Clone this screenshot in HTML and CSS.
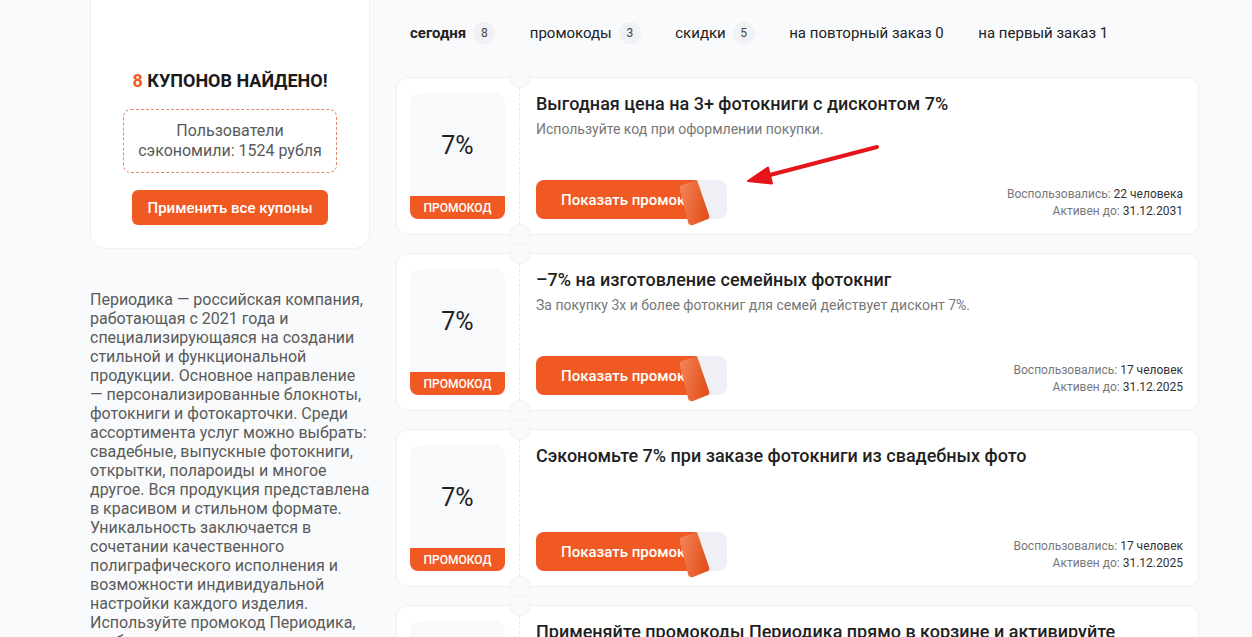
FILE: index.html
```html
<!DOCTYPE html>
<html lang="ru">
<head>
<meta charset="utf-8">
<title>Промокоды Периодика</title>
<link rel="stylesheet" href="styles.css">
</head>
<body>
<div class="page">
  <aside class="side">
    <div class="summary">
      <h2 class="summary-title"><span class="accent">8</span> КУПОНОВ НАЙДЕНО!</h2>
      <div class="saved">Пользователи сэкономили: 1524 рубля</div>
      <button class="apply-all">Применить все купоны</button>
    </div>
    <p class="about">Периодика — российская компания, работающая с 2021 года и специализирующаяся на создании стильной и функциональной продукции. Основное направление — персонализированные блокноты, фотокниги и фотокарточки. Среди ассортимента услуг можно выбрать: свадебные, выпускные фотокниги, открытки, полароиды и многое другое. Вся продукция представлена в красивом и стильном формате. Уникальность заключается в сочетании качественного полиграфического исполнения и возможности индивидуальной настройки каждого изделия. Используйте промокод Периодика, чтобы сэкономить на заказе.</p>
  </aside>

  <main class="main">
    <nav class="tabs">
      <span class="tab tab-active">сегодня <span class="badge">8</span></span>
      <span class="tab">промокоды <span class="badge">3</span></span>
      <span class="tab">скидки <span class="badge">5</span></span>
      <span class="tab">на повторный заказ 0</span>
      <span class="tab">на первый заказ 1</span>
    </nav>

    <div class="coupons">
      <article class="coupon">
        <div class="stub">
          <div class="stub-box">
            <div class="stub-value">7%</div>
            <div class="stub-label">ПРОМОКОД</div>
          </div>
        </div>
        <div class="body">
          <h3 class="title">Выгодная цена на 3+ фотокниги с дисконтом 7%</h3>
          <p class="desc">Используйте код при оформлении покупки.</p>
          <div class="bottom">
            <div class="reveal">
              <span class="reveal-face">Показать промокод</span>
              <svg class="peel" width="40" height="50" viewBox="0 0 40 50"><defs><linearGradient id="pg1" x1="0" y1="0" x2="1" y2="0.3"><stop offset="0" stop-color="#f4875a"/><stop offset="1" stop-color="#e2521d"/></linearGradient></defs><path d="M8 7 Q5 8 6 12 L14 44 Q15 48 19 47 L34 41 Q36 40 35 37 L23 2 Z" fill="url(#pg1)"/></svg>
            </div>
            <div class="stats">
              <div><span class="muted">Воспользовались:</span> 22 человека</div>
              <div><span class="muted">Активен до:</span> 31.12.2031</div>
            </div>
          </div>
        </div>
        <svg class="pointer" width="150" height="60" viewBox="0 0 150 60"><line x1="140" y1="9" x2="29" y2="38" stroke="#e5151b" stroke-width="4" stroke-linecap="round"/><polygon points="11,43 31,29.5 35,45.5" fill="#e5151b" stroke="#e5151b" stroke-width="2" stroke-linejoin="round"/></svg>
      </article>

      <article class="coupon">
        <div class="stub">
          <div class="stub-box">
            <div class="stub-value">7%</div>
            <div class="stub-label">ПРОМОКОД</div>
          </div>
        </div>
        <div class="body">
          <h3 class="title">–7% на изготовление семейных фотокниг</h3>
          <p class="desc">За покупку 3х и более фотокниг для семей действует дисконт 7%.</p>
          <div class="bottom">
            <div class="reveal">
              <span class="reveal-face">Показать промокод</span>
              <svg class="peel" width="40" height="50" viewBox="0 0 40 50"><defs><linearGradient id="pg2" x1="0" y1="0" x2="1" y2="0.3"><stop offset="0" stop-color="#f4875a"/><stop offset="1" stop-color="#e2521d"/></linearGradient></defs><path d="M8 7 Q5 8 6 12 L14 44 Q15 48 19 47 L34 41 Q36 40 35 37 L23 2 Z" fill="url(#pg2)"/></svg>
            </div>
            <div class="stats">
              <div><span class="muted">Воспользовались:</span> 17 человек</div>
              <div><span class="muted">Активен до:</span> 31.12.2025</div>
            </div>
          </div>
        </div>
      </article>

      <article class="coupon">
        <div class="stub">
          <div class="stub-box">
            <div class="stub-value">7%</div>
            <div class="stub-label">ПРОМОКОД</div>
          </div>
        </div>
        <div class="body">
          <h3 class="title">Сэкономьте 7% при заказе фотокниги из свадебных фото</h3>
          <div class="bottom">
            <div class="reveal">
              <span class="reveal-face">Показать промокод</span>
              <svg class="peel" width="40" height="50" viewBox="0 0 40 50"><defs><linearGradient id="pg3" x1="0" y1="0" x2="1" y2="0.3"><stop offset="0" stop-color="#f4875a"/><stop offset="1" stop-color="#e2521d"/></linearGradient></defs><path d="M8 7 Q5 8 6 12 L14 44 Q15 48 19 47 L34 41 Q36 40 35 37 L23 2 Z" fill="url(#pg3)"/></svg>
            </div>
            <div class="stats">
              <div><span class="muted">Воспользовались:</span> 17 человек</div>
              <div><span class="muted">Активен до:</span> 31.12.2025</div>
            </div>
          </div>
        </div>
      </article>

      <article class="coupon">
        <div class="stub">
          <div class="stub-box">
            <div class="stub-value">7%</div>
            <div class="stub-label">ПРОМОКОД</div>
          </div>
        </div>
        <div class="body">
          <h3 class="title">Применяйте промокоды Периодика прямо в корзине и активируйте</h3>
        </div>
      </article>
    </div>
  </main>
</div>
</body>
</html>
```
FILE: styles.css
```css
html, body {
  margin: 0;
  padding: 0;
  height: 637px;
  overflow: hidden;
}
body {
  background: #f9fafc;
  font-family: Roboto, "Noto Sans", "DejaVu Sans", sans-serif;
  color: #222;
}
.page {
  display: flex;
  gap: 26px;
  padding-left: 90px;
}
.side {
  width: 280px;
  flex: none;
}
.summary {
  background: #fff;
  border: 1px solid #f0f1f4;
  border-top: none;
  border-radius: 0 0 16px 16px;
  padding: 69px 0 23px;
  display: flex;
  flex-direction: column;
  align-items: center;
}
.summary-title {
  margin: 0;
  font-size: 18px;
  line-height: 24px;
  font-weight: 700;
  color: #1a1a1a;
}
.accent { color: #f05a22; }
.saved {
  margin-top: 16px;
  width: 214px;
  box-sizing: border-box;
  border: 1px dashed #e1876a;
  border-radius: 8px;
  padding: 11px 8px;
  text-align: center;
  font-size: 16px;
  line-height: 20px;
  color: #5a5a5a;
}
.apply-all {
  margin-top: 17px;
  width: 196px;
  height: 35px;
  border: none;
  border-radius: 6px;
  background: #f05a22;
  color: #fff;
  font-family: inherit;
  font-size: 15px;
  font-weight: 500;
}
.about {
  margin: 41px 0 0;
  font-size: 16px;
  line-height: 19px;
  color: #5a5a5a;
}
.main {
  width: 803px;
  flex: none;
  padding-top: 18px;
}
.tabs {
  display: flex;
  align-items: center;
  gap: 34.5px;
  height: 30px;
  padding-left: 14px;
  margin-bottom: 29px;
  font-size: 15px;
  color: #222;
}
.tab {
  display: flex;
  align-items: center;
  gap: 7px;
  white-space: nowrap;
}
.tab-active { font-weight: 700; }
.badge {
  width: 22px;
  height: 22px;
  border-radius: 50%;
  background: #f0f1f5;
  display: inline-flex;
  align-items: center;
  justify-content: center;
  font-size: 12px;
  font-weight: 400;
  color: #444;
}
.coupons {
  display: flex;
  flex-direction: column;
  gap: 18px;
}
.coupon {
  position: relative;
  height: 158px;
  box-sizing: border-box;
  background: #fff;
  border: 1px solid #eff0f4;
  border-radius: 12px;
  display: flex;
}
.stub {
  position: relative;
  width: 122px;
  flex: none;
  box-sizing: border-box;
  padding: 15px 14px 15px 13px;
}
.stub::before,
.stub::after {
  content: "";
  position: absolute;
  right: -12px;
  width: 22px;
  height: 22px;
  border-radius: 50%;
  background: #f9fafc;
  border: 1px solid #f2f3f6;
  box-sizing: border-box;
}
.stub::before { top: -12px; }
.stub::after { bottom: -12px; }
.stub-box {
  height: 100%;
  background: #f8f9fb;
  border-radius: 10px;
  display: flex;
  flex-direction: column;
}
.stub-value {
  flex: 1;
  display: flex;
  align-items: center;
  justify-content: center;
  font-size: 25px;
  color: #222;
  padding-top: 2px;
}
.stub-label {
  height: 23px;
  background: #f05a22;
  color: #fff;
  border-radius: 0 0 8px 8px;
  font-size: 12px;
  font-weight: 500;
  display: flex;
  align-items: center;
  justify-content: center;
}
.body {
  flex: 1;
  border-left: 1px dashed #e6e8ee;
  margin: 10px 0;
  padding: 5px 15px 5px 16px;
  display: flex;
  flex-direction: column;
}
.title {
  margin: 0;
  font-size: 18px;
  line-height: 22px;
  font-weight: 500;
  color: #1f1f1f;
  white-space: nowrap;
}
.desc {
  margin: 6px 0 0;
  font-size: 14px;
  line-height: 17px;
  color: #777;
}
.bottom {
  margin-top: auto;
  display: flex;
  justify-content: space-between;
  align-items: flex-end;
}
.reveal {
  position: relative;
  width: 191px;
  height: 39px;
  border-radius: 8px;
  background: #eff0f5;
}
.reveal-face {
  display: flex;
  align-items: center;
  box-sizing: border-box;
  width: 160px;
  height: 39px;
  padding-left: 25px;
  border-radius: 8px 0 0 8px;
  background: #f05a22;
  color: #fff;
  font-size: 15px;
  font-weight: 500;
  white-space: nowrap;
  overflow: hidden;
}
.peel {
  position: absolute;
  left: 138px;
  top: -2px;
}
.stats {
  text-align: right;
  font-size: 12px;
  line-height: 17px;
  color: #333;
  margin-bottom: -1px;
}
.muted { color: #777; }
.pointer {
  position: absolute;
  left: 340px;
  top: 60px;
}
```
